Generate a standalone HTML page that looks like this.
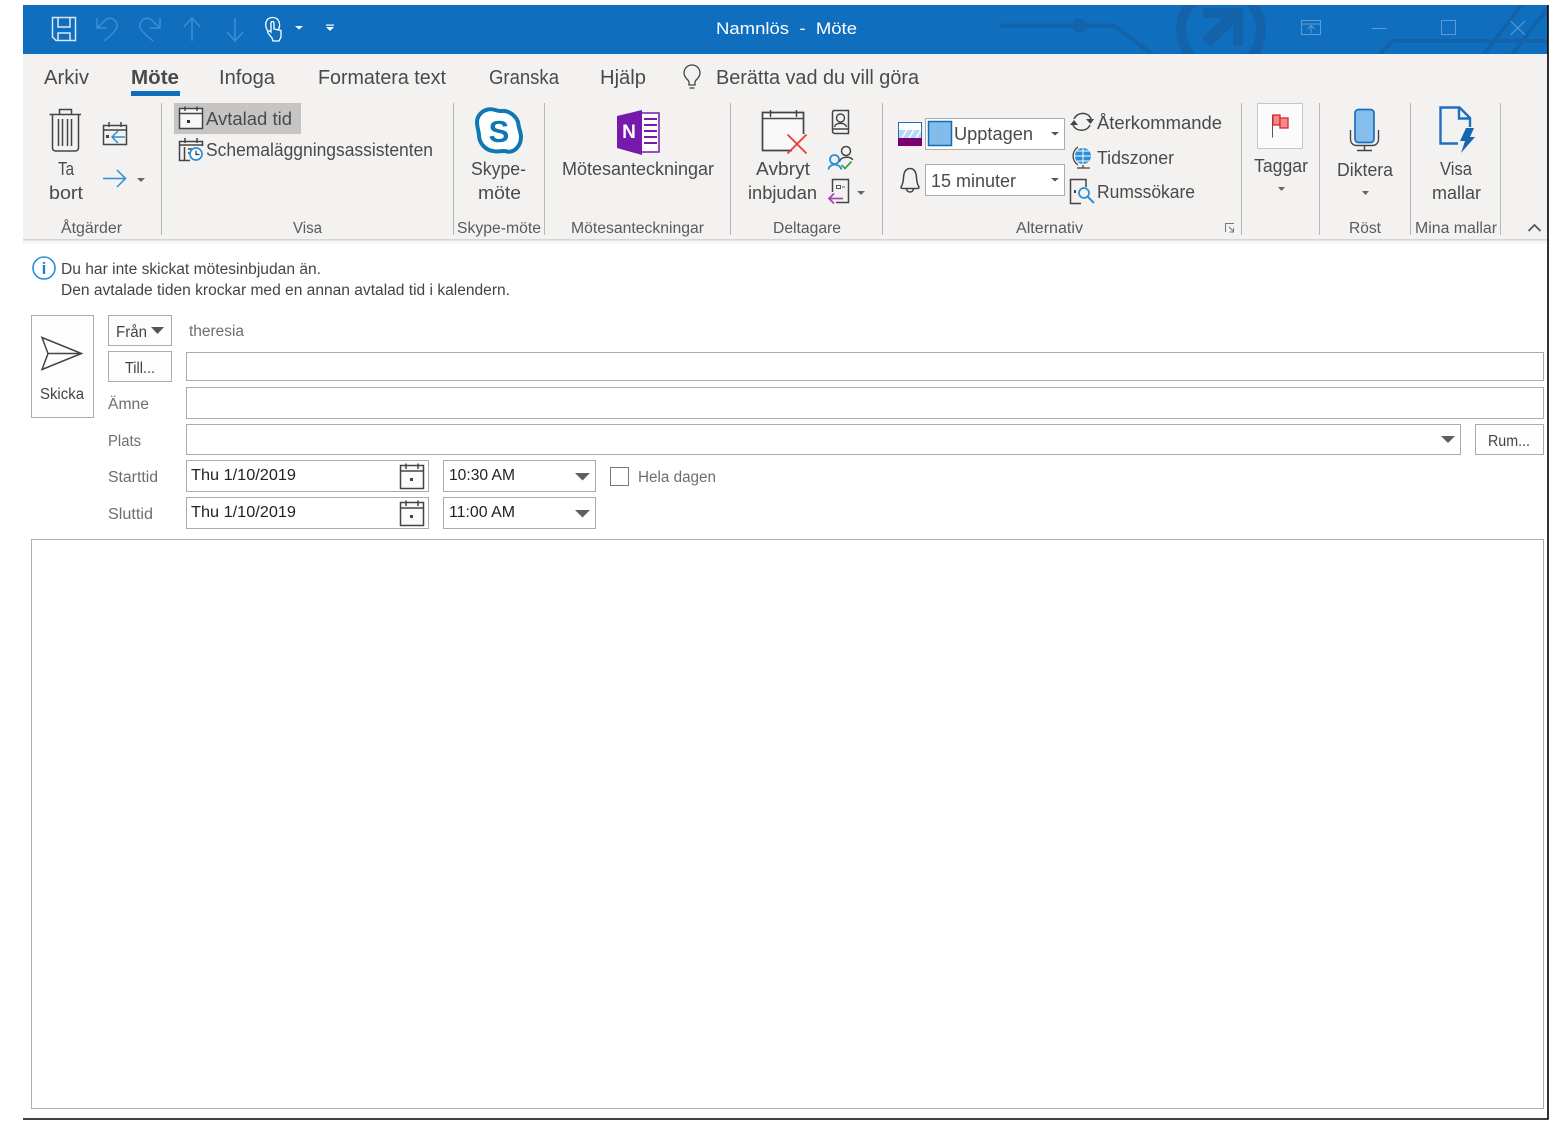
<!DOCTYPE html>
<html><head><meta charset="utf-8"><title>Namnlös - Möte</title>
<style>
html,body{margin:0;padding:0;background:#fff;width:1566px;height:1144px;overflow:hidden}
svg{display:block}
text{font-family:"Liberation Sans",sans-serif;}
.r{font-size:18px;fill:#4a4a4a}
.g{font-size:15.5px;fill:#5a5a5a}
.t{font-size:20px;fill:#4a4a4a}
.f{font-size:15.5px;fill:#6e6e6e}
.d{font-size:15.5px;fill:#444}
.ln{fill:none;stroke:#444;stroke-width:1.5}
.sep{stroke:#b8b8b8;stroke-width:1}
.box{fill:#fff;stroke:#ababab;stroke-width:1}
.btn{fill:#fdfdfd;stroke:#ababab;stroke-width:1}
</style></head><body>
<svg width="1566" height="1144" viewBox="0 0 1566 1144" xmlns="http://www.w3.org/2000/svg">
<defs><clipPath id="tb"><rect x="23" y="5" width="1525" height="49"/></clipPath></defs>
<rect width="1566" height="1144" fill="#fff"/>
<!-- title bar -->
<rect x="23" y="5" width="1525" height="49" fill="#106ebe"/>
<g clip-path="url(#tb)" fill="none" stroke="#1263aa" stroke-width="4">
<path d="M1000 25.500H1114L1152 54"/><circle cx="1079" cy="25.500" r="5"/>
<circle cx="1221" cy="30" r="40" stroke-width="10"/>
<path d="M1203 13H1238V46" stroke-width="10"/>
<path d="M1206 43L1236 14" stroke-width="12"/>
<rect x="1192" y="5" width="0" height="0"/>
<path d="M1380 54L1393 41H1548M1484 54L1523 3M1512 54L1552 3"/>
</g>
<text x="716" y="34" font-size="17" fill="#fff" textLength="141" lengthAdjust="spacingAndGlyphs" xml:space="preserve">Namnlös  -  Möte</text>
<!-- QAT -->
<path d="M52.500 17.500H75.500V40.500H56L52.500 37Z M58 18V27H70V18 M58 40V33H70V40" fill="none" stroke="#dbe8f5" stroke-width="1.500"/>
<g fill="none" stroke="#3d8dd3" stroke-width="1.500">
<path d="M97 18V28H107M97 28L106 19.500C112 16 118 21 117 27C116 31 110 36 104 41"/>
<path d="M160 18V28H150M160 28L151 19.500C145 16 139 21 140 27C141 31 147 36 153 41"/>
<path d="M192 41V19M184 27L192 18L200 27"/>
<path d="M235 18V40M227 32L235 41L243 32"/>
</g>
<g fill="none" stroke="#fff" stroke-width="1.300">
<path d="M270 33C264 29 264 18 272 17.500C280 17 281 26 278 30"/>
<path d="M272 38L268 33C267 31 269 30 271 32V23C271 21 274 21 274 23V29L281 30.500V37L279 41H273Z" fill="#106ebe"/>
</g>
<path d="M295 26H303L299 29.500Z M326 27H334L330 31Z" fill="#fff"/><rect x="326" y="24.500" width="8" height="1.200" fill="#fff"/>
<!-- window buttons -->
<g fill="none" stroke="#5b9cd6" stroke-width="1">
<path d="M1301.500 20.500H1320.500V34.500H1301.500ZM1301.500 24H1320.500M1311 33V26M1307.500 29L1311 25.500L1314.500 29"/>
<path d="M1372 28.500H1387"/><rect x="1441.500" y="20.500" width="14" height="14"/>
<path d="M1510.500 21L1525 35M1525 21L1510.500 35"/>
</g>
<!-- ribbon -->
<rect x="23" y="54" width="1525" height="185" fill="#f3f2f1"/>
<rect x="23" y="239" width="1525" height="1.500" fill="#d5d5d5"/>
<rect x="23" y="240.500" width="1525" height="4" fill="#f8f8f8"/>
<text class="t" x="44" y="84" textLength="45" lengthAdjust="spacingAndGlyphs">Arkiv</text>
<text class="t" x="131" y="84" textLength="48" lengthAdjust="spacingAndGlyphs" font-weight="bold">Möte</text>
<rect x="131" y="91" width="49" height="5" fill="#106ebe"/>
<text class="t" x="219" y="84" textLength="56" lengthAdjust="spacingAndGlyphs">Infoga</text>
<text class="t" x="318" y="84" textLength="128" lengthAdjust="spacingAndGlyphs">Formatera text</text>
<text class="t" x="489" y="84" textLength="70" lengthAdjust="spacingAndGlyphs">Granska</text>
<text class="t" x="600" y="84" textLength="46" lengthAdjust="spacingAndGlyphs">Hjälp</text>
<text class="t" x="716" y="84" textLength="203" lengthAdjust="spacingAndGlyphs">Berätta vad du vill göra</text>
<path d="M689 85V82C689 80 684 78 684 73A8 8 0 0 1 700 73C700 78 695 80 695 82V85ZM689.500 88H694.500" fill="none" stroke="#444" stroke-width="1.300"/>
<!-- separators -->
<path class="sep" d="M161.500 103V235M453.500 103V235M544.500 103V235M730.500 103V235M882.500 103V235M1241.500 103V235M1319.500 103V235M1410.500 103V235M1500.500 103V235"/>
<!-- Åtgärder -->
<path d="M49.500 114.500H81M59.500 114V109.500H71.500V114M52.500 115V147.500C52.500 150 54 151 56 151H75C77 151 78.500 150 78.500 147.500V115M58.500 119V146M62.500 119V146M67.500 119V146M71.500 119V146" class="ln" stroke-width="1.600"/>
<path d="M103.500 125.500H126.500V144.500H103.500ZM103.500 130H126.500M109 122V127M121 122V127" class="ln" stroke-width="1.500"/>
<rect x="106" y="135" width="3" height="3" fill="#444"/>
<path d="M125 137H112M118 131L112 137L118 143" fill="none" stroke="#2a8fd8" stroke-width="1.500"/>
<path d="M103 178.500H125M117 170L125.500 178.500L117 187" fill="none" stroke="#2a8fd8" stroke-width="1.500"/>
<path d="M137 178H145L141 182Z" fill="#666"/>
<text class="r" x="58" y="175" textLength="16" lengthAdjust="spacingAndGlyphs">Ta</text>
<text class="r" x="49" y="199" textLength="34" lengthAdjust="spacingAndGlyphs">bort</text>
<text class="g" x="61" y="233" textLength="61" lengthAdjust="spacingAndGlyphs">Åtgärder</text>
<!-- Visa -->
<rect x="174" y="103" width="127" height="31" fill="#c6c5c4"/>
<path d="M179.500 108.500H202.500V128.500H179.500Z" fill="#f7f7f7"/>
<path d="M179.500 108.500H202.500V128.500H179.500ZM179.500 113.500H202.500M185 106.500V111M197 106.500V111" class="ln" stroke-width="1.400"/>
<rect x="187" y="120" width="3" height="3" fill="#333"/>
<text class="r" x="206" y="125" textLength="86" lengthAdjust="spacingAndGlyphs">Avtalad tid</text>
<path d="M190 160.500H179.500V141.500H202.500V146M179.500 145H202.500M185 138V143M197 138V143M184.500 147V160M188 149H197M188 153H191" class="ln" stroke-width="1.300"/>
<circle cx="196" cy="154" r="6" fill="#fff" stroke="#2a8fd8" stroke-width="1.700"/><path d="M196 150.500V154.500H199.500" fill="none" stroke="#333" stroke-width="1.200"/>
<text class="r" x="206" y="156" textLength="227" lengthAdjust="spacingAndGlyphs">Schemaläggningsassistenten</text>
<text class="g" x="293" y="233" textLength="29" lengthAdjust="spacingAndGlyphs">Visa</text>
<!-- Skype -->
<path d="M488 109.500C493 108 497 111.500 501 111C509 110 517.500 116.500 518.500 124.500C518.500 128 521 132 521 137C521 146 514 153 507 151.500C503 150 498 152.500 493 151C485 150 479.500 143 479 136C479 131 477 128 477 122C477 116 482 110.500 488 109.500Z" fill="#fff" stroke="#0f78b4" stroke-width="4"/>
<text x="499" y="142" text-anchor="middle" font-size="31" font-weight="bold" fill="#0f78b4">S</text>
<text class="r" x="471" y="175" textLength="55" lengthAdjust="spacingAndGlyphs">Skype-</text>
<text class="r" x="478" y="199" textLength="43" lengthAdjust="spacingAndGlyphs">möte</text>
<text class="g" x="457" y="233" textLength="84" lengthAdjust="spacingAndGlyphs">Skype-möte</text>
<!-- OneNote -->
<rect x="641" y="113" width="18" height="39" fill="#fff" stroke="#7719aa" stroke-width="1.500"/>
<path d="M644 119H657M644 125H657M644 131H657M644 137H657M644 143H657" stroke="#7719aa" stroke-width="2"/>
<path d="M617 116L642 110V155L617 148Z" fill="#7719aa"/>
<text x="629" y="138" text-anchor="middle" font-size="19" font-weight="bold" fill="#fff">N</text>
<text class="r" x="562" y="175" textLength="152" lengthAdjust="spacingAndGlyphs">Mötesanteckningar</text>
<text class="g" x="571" y="233" textLength="133" lengthAdjust="spacingAndGlyphs">Mötesanteckningar</text>
<!-- Deltagare -->
<path d="M792 150.500H762.500V112.500H803.500V134" fill="#f9f9f9" stroke="#444" stroke-width="1.700"/>
<path d="M762.500 118.500H803.500M770.500 110V117M796.500 110V117" fill="none" stroke="#444" stroke-width="1.500"/>
<path d="M787.500 134.500L806.500 153.500M806.500 134.500L787.500 153.500" stroke="#f03a34" stroke-width="1.800"/>
<text class="r" x="756" y="175" textLength="54" lengthAdjust="spacingAndGlyphs">Avbryt</text>
<text class="r" x="748" y="199" textLength="69" lengthAdjust="spacingAndGlyphs">inbjudan</text>
<path d="M833.500 110.500H848.500V133.500H835C833.500 133.500 832.500 132.500 832.500 131V112ZM832.500 129H848" class="ln" stroke-width="1.600"/>
<circle cx="840.500" cy="118" r="4" fill="none" stroke="#444" stroke-width="1.400"/><path d="M834.500 127C835 122 846 122 846.500 127" fill="none" stroke="#444" stroke-width="1.400"/>
<circle cx="846" cy="151" r="4.500" fill="none" stroke="#444" stroke-width="1.500"/><path d="M839.500 162C840 156 852 156 852.500 160" fill="none" stroke="#444" stroke-width="1.500"/>
<circle cx="834.500" cy="159.500" r="4.500" fill="#f3f2f1" stroke="#2a8fd8" stroke-width="1.800"/><path d="M828.500 169.500C829 163 840 163 841.500 169.500" fill="#f3f2f1" stroke="#2a8fd8" stroke-width="1.800"/>
<path d="M841.500 165L845 168.500L851.500 161.500" fill="none" stroke="#3aa04a" stroke-width="1.800"/>
<path d="M832.500 192V179.500H848.500V202.500H836" class="ln" stroke-width="1.500"/>
<rect x="836.500" y="185.500" width="4" height="3" fill="none" stroke="#555"/><path d="M842 187H845" stroke="#555"/>
<path d="M843 198.500H829M834 193.500L829 198.500L834 203.500" fill="none" stroke="#a945b8" stroke-width="1.800"/>
<path d="M857 191H865L861 195Z" fill="#666"/>
<text class="g" x="773" y="233" textLength="68" lengthAdjust="spacingAndGlyphs">Deltagare</text>
<!-- Alternativ -->
<rect x="898" y="122" width="24" height="24" fill="#fff"/>
<rect x="899" y="130" width="22" height="8" fill="#b7d8f3"/><path d="M902 138L907 130M909 138L914 130M916 138L921 130" stroke="#fff" stroke-width="1.500"/>
<rect x="898" y="138" width="24" height="8" fill="#7a0071"/>
<rect x="898.500" y="122.500" width="23" height="23" fill="none" stroke="#1f6fb5"/>
<rect x="898" y="138" width="24" height="8" fill="#7a0071"/>
<rect class="box" x="925.500" y="118.500" width="139" height="31"/>
<rect x="928.500" y="121.500" width="23" height="24" fill="#83bcea" stroke="#0f6cb5" stroke-width="1.500"/>
<text class="r" x="954" y="140" textLength="79" lengthAdjust="spacingAndGlyphs">Upptagen</text>
<path d="M1051 132H1059L1055 135.500Z" fill="#555"/>
<path d="M901.500 186C904 182 903 178 904 174C905 170 907 168.500 910 168.500C913 168.500 915 170 916 174C917 178 916 182 918.500 186C919.500 188 919 188.500 917 188.500H903C901 188.500 900.500 188 901.500 186ZM906.500 189C907 193 913 193 913.500 189" fill="none" stroke="#444" stroke-width="1.500"/>
<rect class="box" x="925.500" y="164.500" width="139" height="31"/>
<text class="r" x="931" y="187" textLength="85" lengthAdjust="spacingAndGlyphs">15 minuter</text>
<path d="M1051 178H1059L1055 181.500Z" fill="#555"/>
<path d="M1074 119C1077 112 1088 111 1091 119M1090 125C1087 132 1076 132 1073 125" fill="none" stroke="#444" stroke-width="1.500"/>
<path d="M1086 119H1094L1090.500 124Z M1070 125H1078L1074 120Z" fill="#444"/>
<text class="r" x="1097" y="129" textLength="125" lengthAdjust="spacingAndGlyphs">Återkommande</text>
<circle cx="1083" cy="156" r="8" fill="#2a8fd8"/>
<path d="M1075 156H1091M1083 148V164M1077 151H1089M1077 161H1089" stroke="#fff" stroke-width="1"/>
<path d="M1078 147C1072 151 1071 160 1078 165M1077 168H1090M1083 165V168" fill="none" stroke="#444" stroke-width="1.300"/>
<text class="r" x="1097" y="164" textLength="77" lengthAdjust="spacingAndGlyphs">Tidszoner</text>
<path d="M1086 187V179.500H1070.500V203.500H1081" class="ln" stroke-width="1.500"/>
<rect x="1074" y="190" width="2" height="3" fill="#444"/>
<circle cx="1084" cy="193" r="5" fill="none" stroke="#2a8fd8" stroke-width="1.700"/><path d="M1088 197L1094 203" stroke="#2a8fd8" stroke-width="2"/>
<text class="r" x="1097" y="198" textLength="98" lengthAdjust="spacingAndGlyphs">Rumssökare</text>
<text class="g" x="1016" y="233" textLength="67" lengthAdjust="spacingAndGlyphs">Alternativ</text>
<path d="M1225.500 232V223.500H1234M1229 227L1233 231M1233.500 228V232H1229.500" fill="none" stroke="#777" stroke-width="1"/>
<!-- Taggar -->
<rect x="1257.500" y="103.500" width="45" height="45" fill="#fbfbfb" stroke="#c6c6c6"/>
<path d="M1272.500 115V137.500" stroke="#555" stroke-width="1"/>
<rect x="1273" y="115" width="7" height="10" fill="#f58a8a" stroke="#e0242a" stroke-width="1.300"/>
<rect x="1280" y="118" width="8" height="10" fill="#f58a8a" stroke="#e0242a" stroke-width="1.300"/>
<text class="r" x="1254" y="172" textLength="54" lengthAdjust="spacingAndGlyphs">Taggar</text>
<path d="M1278 187H1285L1281.500 191Z" fill="#666"/>
<!-- Diktera -->
<rect x="1355" y="109.500" width="19" height="33" rx="3.500" fill="#85bdec" stroke="#1f6fb5" stroke-width="1.700"/>
<path d="M1350.500 130V139C1350.500 143 1353 145.500 1357 145.500H1372C1376 145.500 1378.500 143 1378.500 139V130M1364.500 146V150.500M1357 150.500H1372" fill="none" stroke="#444" stroke-width="1.400"/>
<text class="r" x="1337" y="176" textLength="56" lengthAdjust="spacingAndGlyphs">Diktera</text>
<path d="M1362 191H1369L1365.500 195Z" fill="#666"/>
<text class="g" x="1349" y="233" textLength="32" lengthAdjust="spacingAndGlyphs">Röst</text>
<!-- Visa mallar -->
<path d="M1458 143.500H1440.500V107.500H1459.500L1470 118V127M1459 108V118.500H1470" fill="none" stroke="#1e6fbf" stroke-width="2.400"/>
<path d="M1466 128H1474L1470 137H1475L1461 153L1465 141H1460Z" fill="#1566b0"/>
<text class="r" x="1440" y="175" textLength="32" lengthAdjust="spacingAndGlyphs">Visa</text>
<text class="r" x="1432" y="199" textLength="49" lengthAdjust="spacingAndGlyphs">mallar</text>
<text class="g" x="1415" y="233" textLength="82" lengthAdjust="spacingAndGlyphs">Mina mallar</text>
<path d="M1528.500 231L1534.500 225L1540.500 231" fill="none" stroke="#555" stroke-width="1.800"/>
<!-- info bar -->
<circle cx="44" cy="268" r="11" fill="#fff" stroke="#2a8fd8" stroke-width="1.600"/>
<text x="44" y="274" text-anchor="middle" font-size="17" font-weight="bold" fill="#1f7fc8">i</text>
<text class="d" x="61" y="274" textLength="260" lengthAdjust="spacingAndGlyphs">Du har inte skickat mötesinbjudan än.</text>
<text class="d" x="61" y="295" textLength="449" lengthAdjust="spacingAndGlyphs">Den avtalade tiden krockar med en annan avtalad tid i kalendern.</text>
<!-- send -->
<rect class="btn" x="31.500" y="315.500" width="62" height="102"/>
<path d="M42 337.500L81.500 353.500L42 369.500L48 353.500ZM48 353.500H81" fill="none" stroke="#444" stroke-width="1.500"/>
<text class="d" x="40" y="399" textLength="44" lengthAdjust="spacingAndGlyphs">Skicka</text>
<!-- form -->
<rect class="btn" x="108.500" y="315.500" width="63" height="30"/>
<text class="d" x="116" y="337" textLength="31" lengthAdjust="spacingAndGlyphs">Från</text>
<path d="M151 327H164L157.500 334Z" fill="#555"/>
<text class="f" x="189" y="336" textLength="55" lengthAdjust="spacingAndGlyphs">theresia</text>
<rect class="btn" x="108.500" y="351.500" width="63" height="30"/>
<text class="d" x="125" y="373" textLength="30" lengthAdjust="spacingAndGlyphs">Till...</text>
<rect class="box" x="186.500" y="352.500" width="1357" height="28"/>
<text class="f" x="108" y="409" textLength="41" lengthAdjust="spacingAndGlyphs">Ämne</text>
<rect class="box" x="186.500" y="387.500" width="1357" height="31"/>
<text class="f" x="108" y="446" textLength="33" lengthAdjust="spacingAndGlyphs">Plats</text>
<rect class="box" x="186.500" y="424.500" width="1274" height="30"/>
<path d="M1441 436H1455L1448 443Z" fill="#5f5f5f"/>
<rect class="btn" x="1475.500" y="424.500" width="68" height="30"/>
<text class="d" x="1488" y="446" textLength="42" lengthAdjust="spacingAndGlyphs">Rum...</text>
<text class="f" x="108" y="482" textLength="50" lengthAdjust="spacingAndGlyphs">Starttid</text>
<rect class="box" x="186.500" y="460.500" width="242" height="31"/>
<text class="d" x="191" y="480" textLength="105" lengthAdjust="spacingAndGlyphs" style="fill:#222">Thu 1/10/2019</text>
<path d="M400.500 465.500H423.500V488.500H400.500ZM400.500 471H423.500M406 463.500V469M418 463.500V469" fill="#fafafa" stroke="#444" stroke-width="1.500"/>
<rect x="410" y="478" width="3" height="3" fill="#444"/>
<rect class="box" x="443.500" y="460.500" width="152" height="31"/>
<text class="d" x="449" y="480" textLength="66" lengthAdjust="spacingAndGlyphs" style="fill:#222">10:30 AM</text>
<path d="M575 473H590L582.500 480.500Z" fill="#5f5f5f"/>
<rect x="610.500" y="467.500" width="18" height="18" fill="#fff" stroke="#777"/>
<text class="f" x="638" y="482" textLength="78" lengthAdjust="spacingAndGlyphs">Hela dagen</text>
<text class="f" x="108" y="519" textLength="45" lengthAdjust="spacingAndGlyphs">Sluttid</text>
<rect class="box" x="186.500" y="497.500" width="242" height="31"/>
<text class="d" x="191" y="517" textLength="105" lengthAdjust="spacingAndGlyphs" style="fill:#222">Thu 1/10/2019</text>
<path d="M400.500 502.500H423.500V525.500H400.500ZM400.500 508H423.500M406 500.500V506M418 500.500V506" fill="#fafafa" stroke="#444" stroke-width="1.500"/>
<rect x="410" y="515" width="3" height="3" fill="#444"/>
<rect class="box" x="443.500" y="497.500" width="152" height="31"/>
<text class="d" x="449" y="517" textLength="66" lengthAdjust="spacingAndGlyphs" style="fill:#222">11:00 AM</text>
<path d="M575 510H590L582.500 517.500Z" fill="#5f5f5f"/>
<!-- body -->
<rect x="31.500" y="539.500" width="1512" height="569" fill="#fff" stroke="#abafb9"/>
<!-- window border -->
<path d="M23 1119H1548V5" fill="none" stroke="#000" stroke-width="1.600"/>
</svg>
</body></html>
